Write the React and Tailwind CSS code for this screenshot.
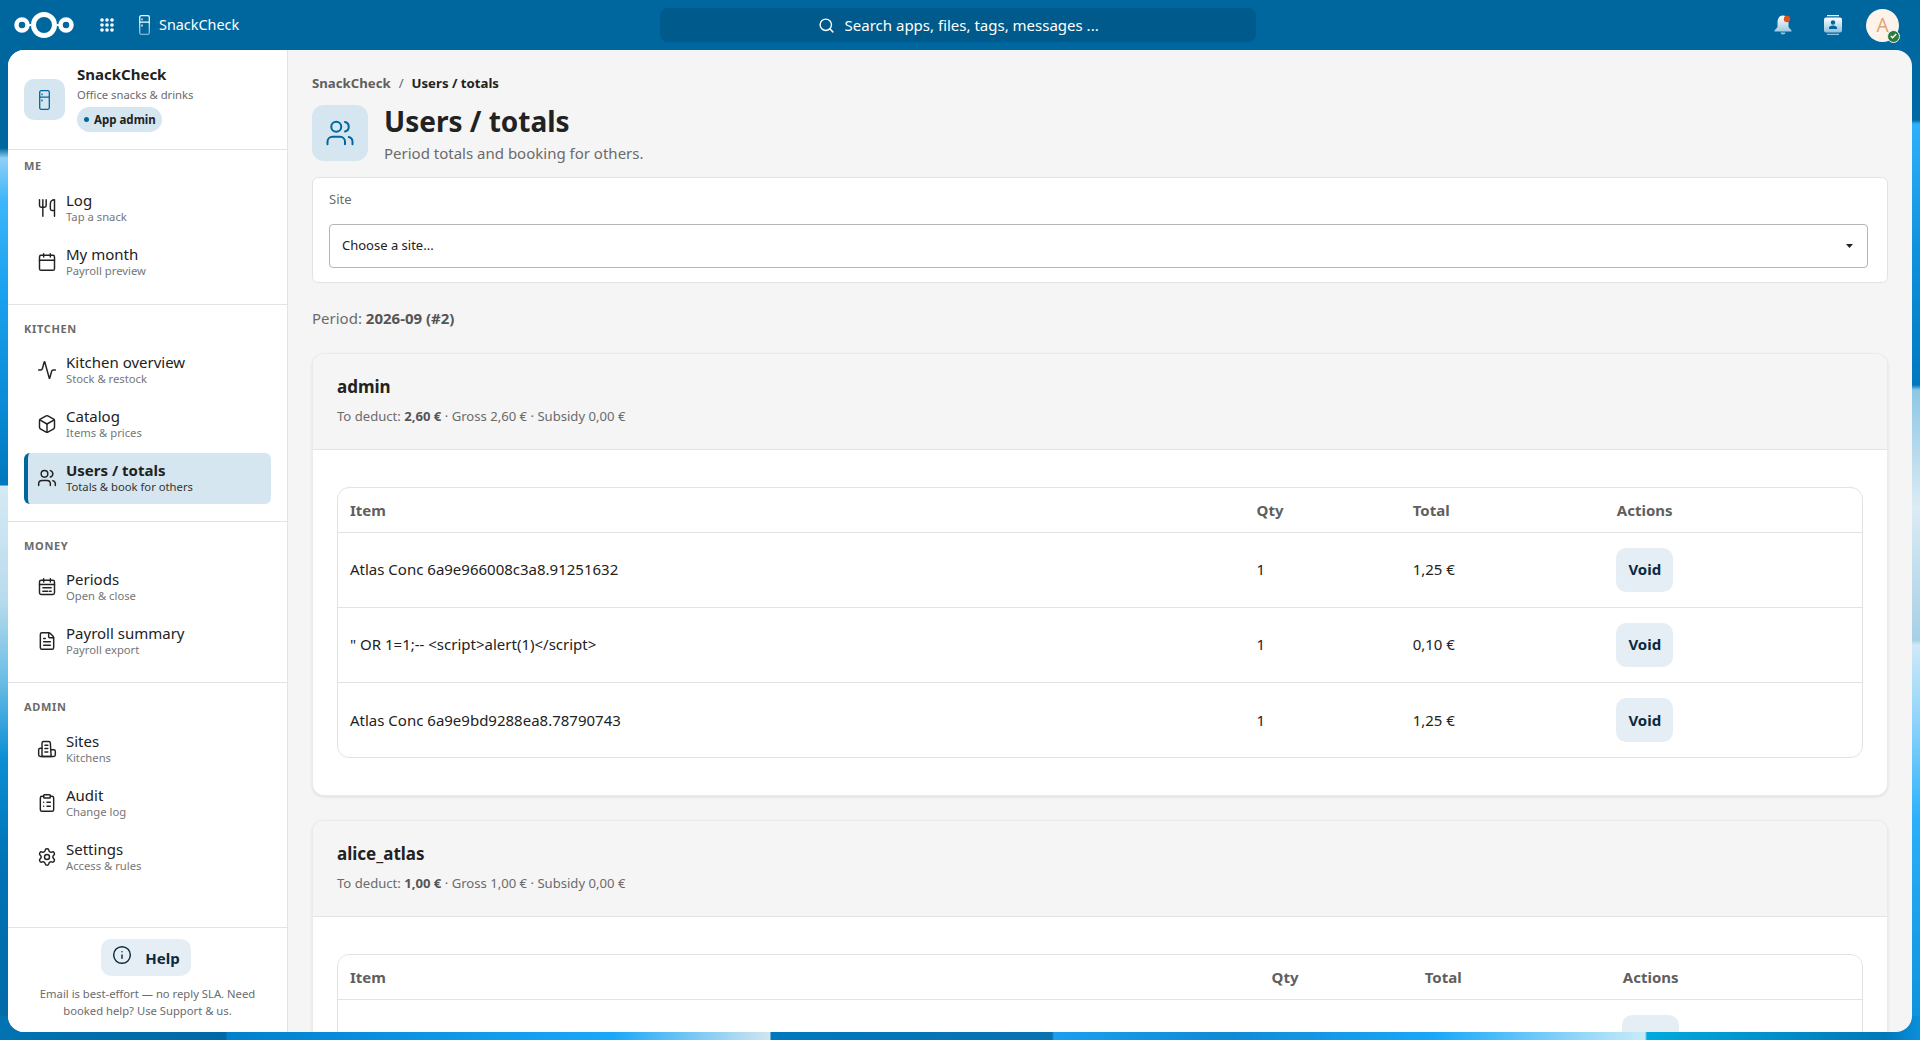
// App.jsx - SnackCheck "Users / totals" page inside the Nextcloud shell

import {
  Activity,
  Box,
  Calendar,
  ClipboardList,
  FileText,
  Info,
  Search,
  Settings,
  Users,
  Utensils,
} from "lucide-react";

// wallpaper only peeks through at the left, right and bottom edges of the content box
const wallpaper =
  "[background:linear-gradient(90deg,#0073b0_0,#0069a5_226px,#0080cc_227px,#1aa8f8_612px,#d0e6f0_770px,#0078be_771px,#0a72b0_1052px,#1ba0ee_1054px,#0f8ad5_1225px,#18a8f8_1433px,#c8ebf8_1645px,#00aadd_1647px,#0078b8_1885px,#0a8fda_1920px)_0_1016px/1920px_24px_no-repeat,linear-gradient(180deg,#00679e_0,#00679e_148px,#8fd0f5_158px,#3db6fb_200px,#1ca4f0_280px,#0a8cd8_400px,#0077bd_485px,#d6e9f4_486px,#b8dbed_600px,#6bbde5_680px,#0a8ed4_760px,#0073b5_860px,#0069a5_1040px)_0_0/24px_1040px_no-repeat,linear-gradient(180deg,#00679e_0,#0069a5_120px,#2fb0fb_124px,#0f92de_250px,#0078c0_385px,#8cc8e4_390px,#dcebf4_507px,#a5d0e6_640px,#cfe9f8_645px,#8fd4fb_720px,#2ab0fb_820px,#0a8fda_1040px)_1896px_0/24px_1040px_no-repeat,#00679e]";

// lucide has no calendar with text lines, nor this tower block
const CalendarLines = ({ size, strokeWidth, className }) => (
  <svg width={size} height={size} viewBox="0 0 24 24" fill="none" stroke="currentColor" strokeWidth={strokeWidth} strokeLinecap="round" strokeLinejoin="round" className={className}>
    <rect x="3" y="4" width="18" height="17" rx="2" />
    <path d="M8 2v4M16 2v4M3 9h18M7 13h10M7 17h6M15 17h2" />
  </svg>
);

const Tower = ({ size, strokeWidth, className }) => (
  <svg width={size} height={size} viewBox="0 0 24 24" fill="none" stroke="currentColor" strokeWidth={strokeWidth} strokeLinecap="round" strokeLinejoin="round" className={className}>
    <path d="M6 21V5a2 2 0 0 1 2-2h6a2 2 0 0 1 2 2l1 16z" />
    <path d="M6 11H4a2 2 0 0 0-2 2v6a2 2 0 0 0 2 2h16a2 2 0 0 0 2-2v-4a2 2 0 0 0-2-2h-3.5" />
    <path d="M9.5 7.5h3.5M9.5 11.5h3.5M9.5 15.5h3.5" />
  </svg>
);

const navSections = [
  {
    label: "Me",
    items: [
      { icon: Utensils, title: "Log", sub: "Tap a snack" },
      { icon: Calendar, title: "My month", sub: "Payroll preview" },
    ],
  },
  {
    label: "Kitchen",
    items: [
      { icon: Activity, title: "Kitchen overview", sub: "Stock & restock" },
      { icon: Box, title: "Catalog", sub: "Items & prices" },
      { icon: Users, title: "Users / totals", sub: "Totals & book for others", active: true },
    ],
  },
  {
    label: "Money",
    items: [
      { icon: CalendarLines, title: "Periods", sub: "Open & close" },
      { icon: FileText, title: "Payroll summary", sub: "Payroll export" },
    ],
  },
  {
    label: "Admin",
    items: [
      { icon: Tower, title: "Sites", sub: "Kitchens" },
      { icon: ClipboardList, title: "Audit", sub: "Change log" },
      { icon: Settings, title: "Settings", sub: "Access & rules" },
    ],
  },
];

const sectionBoxes = [
  "pt-[7px] pb-[16.5px] border-b border-[#e3e3e3]",
  "pt-[15px] pb-[17px] border-b border-[#e3e3e3]",
  "pt-[15px] pb-[15.5px] border-b border-[#e3e3e3]",
  "pt-[15px]",
];

const adminRows = [
  { item: "Atlas Conc 6a9e966008c3a8.91251632", qty: "1", total: "1,25 €", action: "Void" },
  { item: '" OR 1=1;-- <script>alert(1)</script>', qty: "1", total: "0,10 €", action: "Void" },
  { item: "Atlas Conc 6a9e9bd9288ea8.78790743", qty: "1", total: "1,25 €", action: "Void" },
];

// this row is cut off by the window, only the top of its button shows
const aliceRows = [{ item: "", qty: "", total: "", action: "" }];

const NextcloudLogo = () => (
  <svg width="62" height="28" viewBox="0 0 62 28" fill="none" stroke="white">
    <circle cx="8" cy="14" r="5.5" strokeWidth="4.5" />
    <circle cx="30" cy="14" r="10.5" strokeWidth="5" />
    <circle cx="52" cy="14" r="5.5" strokeWidth="4.5" />
    <path d="M14 14h3M43 14h3" strokeWidth="2" />
  </svg>
);

const AppsIcon = () => (
  <svg width="14" height="14" viewBox="0 0 14 14" fill="white">
    {[2, 7, 12].map((y) =>
      [2, 7, 12].map((x) => <circle key={`${x}-${y}`} cx={x} cy={y} r="1.8" />)
    )}
  </svg>
);

const Fridge = ({ className, stroke = "currentColor" }) => (
  <svg className={className} viewBox="0 0 11 20" fill="none" stroke={stroke} strokeWidth="1.3">
    <rect x="0.7" y="0.7" width="9.6" height="18.6" rx="1.5" />
    <path d="M0.7 7.2h9.6M3 3.6v1.6M3 9.6v2" />
  </svg>
);

const HeaderFridge = () => (
  <svg className="w-[11px] h-[20px]" viewBox="0 0 11 20" fill="none" strokeWidth="1.3">
    <defs>
      <linearGradient id="fridgeFade" x1="0" y1="0" x2="0" y2="1">
        <stop offset="0" stopColor="#ffffff" />
        <stop offset="1" stopColor="#7fb6d4" />
      </linearGradient>
    </defs>
    <rect x="0.7" y="0.7" width="9.6" height="18.6" rx="1.5" stroke="url(#fridgeFade)" />
    <path d="M0.7 7.2h9.6M3 3.6v1.6M3 9.6v2" stroke="#ffffff" />
  </svg>
);

const BellIcon = () => (
  <svg width="20" height="22" viewBox="0 0 20 22">
    <defs>
      <linearGradient id="bellFade" x1="0" y1="0" x2="0" y2="1">
        <stop offset="0" stopColor="#ffffff" />
        <stop offset="1" stopColor="#8fc0dc" />
      </linearGradient>
    </defs>
    <path
      d="M10 1.5C6 1.5 4.5 5 4.5 8.5v4.5L1.5 16.5v1h17v-1l-3-3.5V8.5C15.5 5 14 1.5 10 1.5zM7.5 18.5h5a2.5 2 0 0 1-5 0z"
      fill="url(#bellFade)"
    />
    <circle cx="14" cy="5" r="3.2" fill="#e0521d" />
  </svg>
);

const ContactsIcon = () => (
  <svg width="18" height="20" viewBox="0 0 18 20">
    <defs>
      <linearGradient id="cardFade" x1="0" y1="0" x2="0" y2="1">
        <stop offset="0" stopColor="#ffffff" />
        <stop offset="1" stopColor="#8fc0dc" />
      </linearGradient>
    </defs>
    <path d="M3 0h12v1.2H3zM3 18.8h12V20H3z" fill="url(#cardFade)" />
    <rect x="0" y="2.5" width="18" height="15" rx="2" fill="url(#cardFade)" />
    <circle cx="9" cy="7.5" r="2.2" fill="#00679e" />
    <path d="M4.8 14c0-2.4 2-3.4 4.2-3.4s4.2 1 4.2 3.4z" fill="#00679e" />
  </svg>
);

const TopBar = () => (
  <header className="h-[50px] flex items-center shrink-0 relative">
    <div className="ml-[14px]">
      <NextcloudLogo />
    </div>
    <div className="ml-[24px]">
      <AppsIcon />
    </div>
    <div className="ml-[25px] flex items-center gap-[9px] text-white text-[14.4px]">
      <HeaderFridge />
      <span>SnackCheck</span>
    </div>

    <div className="ml-[421px] w-[596px] h-[34px] rounded-lg bg-[#005a8b] flex items-center justify-center gap-[10px] text-white text-[15px]">
      <Search size={17} strokeWidth={2} />
      <span>Search apps, files, tags, messages ...</span>
    </div>

    <div className="ml-auto flex items-center">
      <BellIcon />
      <div className="ml-[31px]">
        <ContactsIcon />
      </div>
      <div className="relative ml-[24px] mr-[21px] w-[33px] h-[33px] rounded-full bg-[#fdf3ea] flex items-center justify-center text-[#dfa67a] text-[19px]">
        A
        <span className="absolute -right-[1px] -bottom-[1px] w-[13px] h-[13px] rounded-full bg-[#2d7b41] border border-[#fdf3ea] flex items-center justify-center">
          <svg width="7" height="6" viewBox="0 0 7 6" fill="none" stroke="white" strokeWidth="1.4">
            <path d="M0.8 3l1.8 1.8L6.2 1" />
          </svg>
        </span>
      </div>
    </div>
  </header>
);

const NavItem = ({ icon: Icon, title, sub, active }) => (
  <div
    className={
      active
        ? "h-[51px] flex items-center gap-[9px] rounded-md border-l-4 border-[#00679e] bg-[#d6e6f0] pl-[9px]"
        : "h-[51px] flex items-center gap-[9px] rounded-md border-l-4 border-transparent pl-[9px]"
    }
  >
    <Icon size={20} strokeWidth={1.75} className="text-[#222222] shrink-0" />
    <div className="flex flex-col -mt-[1px]">
      <span className={active ? "text-[15px] leading-[18px] font-bold text-[#222222]" : "text-[15px] leading-[18px] text-[#222222]"}>
        {title}
      </span>
      <span className={active ? "text-[11.25px] leading-[15px] text-[#333333]" : "text-[11.25px] leading-[15px] text-[#767676]"}>
        {sub}
      </span>
    </div>
  </div>
);

const Sidebar = () => (
  <aside className="w-[280px] shrink-0 bg-white border-r border-[#e3e3e3] flex flex-col">
    <div className="h-[100px] shrink-0 border-b border-[#e3e3e3] pl-[16px] flex items-center gap-[12px]">
      <div className="w-[41px] h-[41px] rounded-[10px] bg-[#d6e6f0] flex items-center justify-center text-[#00679e]">
        <Fridge className="w-[11px] h-[20px]" />
      </div>
      <div className="flex flex-col items-start">
        <span className="text-[15px] leading-[20px] font-bold text-[#222222] -mt-[3px]">SnackCheck</span>
        <span className="text-[11.25px] leading-[18px] mt-[2px] text-[#6b6b6b]">Office snacks & drinks</span>
        <span className="mt-[3px] h-[25px] pl-[7px] pr-[6px] rounded-full bg-[#d6e6f0] flex items-center gap-[5px] text-[11.5px] font-bold text-[#222222]">
          <span className="w-[5px] h-[5px] rounded-full bg-[#00679e]" />
          App admin
        </span>
      </div>
    </div>

    <nav className="flex-1">
      {navSections.map((section, i) => (
        <section key={section.label} className={sectionBoxes[i]}>
          <h3 className="pl-[16px] h-[18px] leading-[18px] text-[11px] font-bold uppercase tracking-[0.06em] text-[#6b6b6b]">
            {section.label}
          </h3>
          <div className="mt-[7px] mx-[16px] flex flex-col gap-[3px]">
            {section.items.map((item) => (
              <NavItem key={item.title} {...item} />
            ))}
          </div>
        </section>
      ))}
    </nav>

    <div className="h-[105px] shrink-0 border-t border-[#e3e3e3] flex flex-col items-center pt-[11px]">
      <button className="w-[90px] h-[37px] mr-[3px] rounded-[10px] bg-[#e6eef5] flex items-center justify-center gap-[13px] text-[15px] font-bold text-[#0b2a40]">
        <Info size={20} strokeWidth={1.75} className="-mt-[6px]" />
        <span className="mt-[1px]">Help</span>
      </button>
      <p className="mt-[9px] w-[240px] text-center text-[11.25px] leading-[17px] text-[#6b6b6b]">
        Email is best-effort — no reply SLA. Need booked help? Use Support & us.
      </p>
    </div>
  </aside>
);

const UserCard = ({ name, deduct, gross, subsidy, rows, cols }) => (
  <section className="rounded-xl border border-[#ebebeb] bg-white shadow-[0_1px_3px_rgba(0,0,0,0.1)] overflow-hidden">
    <div className="bg-[#f5f5f5] border-b border-[#e3e3e3] px-[24px] pt-[20px] pb-[24px]">
      <h2 className="text-[17px] leading-[26px] font-bold text-[#222222]">{name}</h2>
      <p className="mt-[7px] text-[13.1px] leading-[18px] text-[#6b6b6b]">
        To deduct: <b className="text-[#555555]">{deduct}</b> · Gross {gross} · Subsidy {subsidy}
      </p>
    </div>
    <div className="px-[24px] pt-[37px] pb-[37px]">
      <div className="rounded-xl border border-[#e3e3e3] overflow-hidden">
        <table className="w-full table-fixed text-[15px] text-[#222222]">
          <thead>
            <tr className="h-[44px] text-left text-[#5f5f5f]">
              <th className={`pl-[12px] font-bold ${cols[0]}`}>Item</th>
              <th className={`pl-[12px] font-bold ${cols[1]}`}>Qty</th>
              <th className={`pl-[12px] font-bold ${cols[2]}`}>Total</th>
              <th className={`pl-[12px] font-bold ${cols[3]}`}>Actions</th>
            </tr>
          </thead>
          <tbody>
            {rows.map((row, index) => (
              <tr key={index} className="h-[75px] border-t border-[#e3e3e3]">
                <td className="pl-[12px]">{row.item}</td>
                <td className="pl-[12px]">{row.qty}</td>
                <td className="pl-[12px]">{row.total}</td>
                <td className="pl-[12px]">
                  <button className="block w-[57px] h-[44px] -ml-[0.5px] rounded-[10px] bg-[#e6eef5] font-bold text-[#0b2a40]">
                    {row.action}
                  </button>
                </td>
              </tr>
            ))}
          </tbody>
        </table>
      </div>
    </div>
  </section>
);

const App = () => {
  return (
    <div className={`h-[1040px] w-[1920px] overflow-hidden flex flex-col font-['Noto_Sans',sans-serif] ${wallpaper}`}>
      <TopBar />
      <div className="h-[982px] mx-2 flex rounded-2xl overflow-hidden bg-[#f5f5f5]">
        <Sidebar />
        <main className="flex-1 min-w-0 overflow-hidden px-6 pt-[24px]">
          <div className="h-[20px] flex items-center gap-[8px] text-[13.2px] font-bold">
            <span className="text-[#5f5f5f]">SnackCheck</span>
            <span className="text-[#6b6b6b] font-normal">/</span>
            <span className="text-[#222222]">Users / totals</span>
          </div>

          <div className="mt-[11px] h-[56px] flex items-start gap-[16px]">
            <div className="w-[56px] h-[56px] rounded-xl bg-[#d6e6f0] flex items-center justify-center text-[#00679e]">
              <Users size={30} strokeWidth={1.6} />
            </div>
            <div>
              <h1 className="text-[28px] leading-[32px] font-bold text-[#222222]">Users / totals</h1>
              <p className="mt-[8px] text-[15px] leading-[16px] text-[#6b6b6b]">
                Period totals and booking for others.
              </p>
            </div>
          </div>

          <div className="mt-[16px] h-[106px] rounded-md border border-[#e3e3e3] bg-white pl-[16px] pr-[19px] pt-[11px]">
            <label className="block text-[13px] leading-[20px] text-[#6b6b6b]">Site</label>
            <div className="mt-[15px] h-[44px] rounded border border-[#b5b5b5] flex items-center justify-between pl-[12px] pr-[14px] text-[13px] text-[#222222]">
              <span>Choose a site...</span>
              <svg width="7" height="4" viewBox="0 0 7 4" fill="#222222">
                <path d="M0 0h7L3.5 4z" />
              </svg>
            </div>
          </div>

          <p className="mt-[24px] text-[15px] leading-[22px] text-[#6b6b6b]">
            Period: <b className="text-[#555555]">2026-09 (#2)</b>
          </p>

          <div className="mt-[24px] flex flex-col gap-[24px]">
            <UserCard
              name="admin"
              deduct="2,60 €"
              gross="2,60 €"
              subsidy="0,00 €"
              rows={adminRows}
              cols={["w-[906px]", "w-[156px]", "w-[204px]", "w-[257px]"]}
            />
            <UserCard
              name="alice_atlas"
              deduct="1,00 €"
              gross="1,00 €"
              subsidy="0,00 €"
              rows={aliceRows}
              cols={["w-[921px]", "w-[153px]", "w-[198px]", "w-[251px]"]}
            />
          </div>
        </main>
      </div>
    </div>
  );
};

export default App;
